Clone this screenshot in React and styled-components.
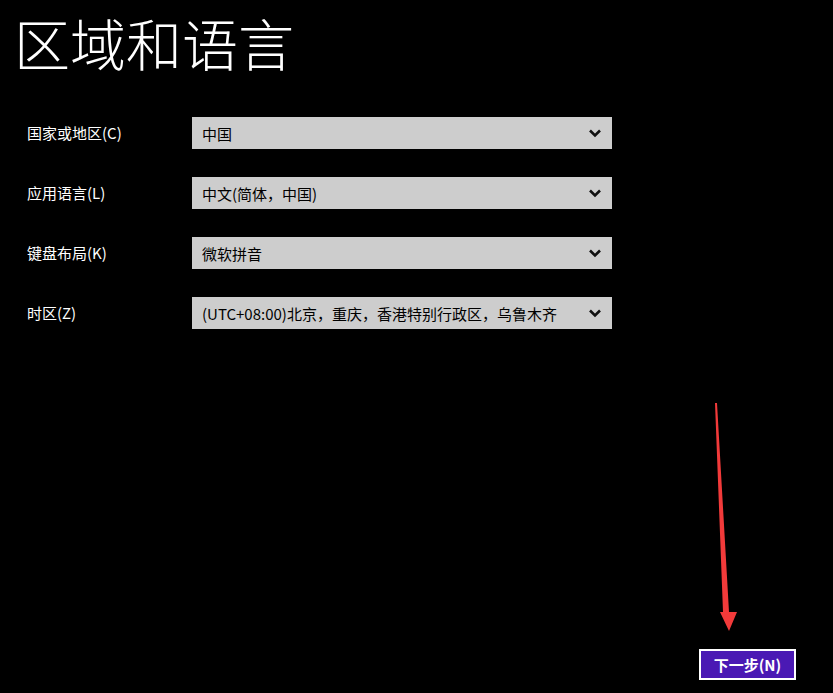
import React from 'react';
import styled, { createGlobalStyle } from 'styled-components';

const GlobalStyle = createGlobalStyle`
    html, body {
        margin: 0;
        padding: 0;
        background: #000;
    }
    body {
        font-family: "Noto Sans CJK SC", "Noto Sans", "Liberation Sans", sans-serif;
    }
`

const Page = styled.div`
    position: relative;
    width: 833px;
    height: 693px;
    box-sizing: border-box;
    background: #000;
    color: #fff;
    display: flex;
    flex-direction: column;
    padding: 11px 37px 13px 0;
    overflow: hidden;
`

const Title = styled.h1`
    margin: 0 0 0 14px;
    font-size: 56px;
    line-height: 62px;
    font-weight: 300;
    letter-spacing: 0;
    color: #fff;
`

const Form = styled.div`
    margin-top: 44px;
    display: grid;
    grid-template-columns: 192px 420px;
    row-gap: 28px;
    align-items: center;
`

const Label = styled.label`
    padding-left: 27px;
    font-size: 15px;
    line-height: 20px;
    color: #fff;
`

const Select = styled.div`
    height: 32px;
    background: #cdcdcd;
    color: #000;
    display: flex;
    align-items: center;
    justify-content: space-between;
    padding: 0 10px 0 10px;
    box-sizing: border-box;
    font-size: 15px;
    span {
        white-space: nowrap;
        overflow: hidden;
    }
    svg {
        flex: none;
    }
`

const Footer = styled.div`
    margin-top: auto;
    display: flex;
    justify-content: flex-end;
`

const NextButton = styled.button`
    width: 97px;
    height: 31px;
    box-sizing: border-box;
    border: 2px solid #fff;
    background: #4a19b4;
    color: #fff;
    font-family: "Noto Sans CJK SC", "Liberation Sans", sans-serif;
    font-size: 15px;
    font-weight: bold;
    padding: 0;
    cursor: pointer;
`

const Annotation = styled.svg`
    position: absolute;
    left: 0;
    top: 0;
    pointer-events: none;
`

const Chevron = () => (
    <svg width="14" height="10" viewBox="0 0 14 10">
        <path d="M2 2.5 L7 7.5 L12 2.5" fill="none" stroke="#111" strokeWidth="2.6" />
    </svg>
)

const fields = [
    { label: '国家或地区(C)', value: '中国' },
    { label: '应用语言(L)', value: '中文(简体，中国)' },
    { label: '键盘布局(K)', value: '微软拼音' },
    { label: '时区(Z)', value: '(UTC+08:00)北京，重庆，香港特别行政区，乌鲁木齐' },
];

export default function App() {
    return (
        <>
            <GlobalStyle />
            <Page>
                <Title>区域和语言</Title>
                <Form>
                    {fields.map((f) => (
                        <React.Fragment key={f.label}>
                            <Label>{f.label}</Label>
                            <Select>
                                <span>{f.value}</span>
                                <Chevron />
                            </Select>
                        </React.Fragment>
                    ))}
                </Form>
                <Footer>
                    <NextButton>下一步(N)</NextButton>
                </Footer>
                <Annotation width="833" height="693">
                    <polygon points="715,403 717,403 729,612 737,612 729,631 720,612 723,612" fill="#f23a3a" />
                </Annotation>
            </Page>
        </>
    );
}
